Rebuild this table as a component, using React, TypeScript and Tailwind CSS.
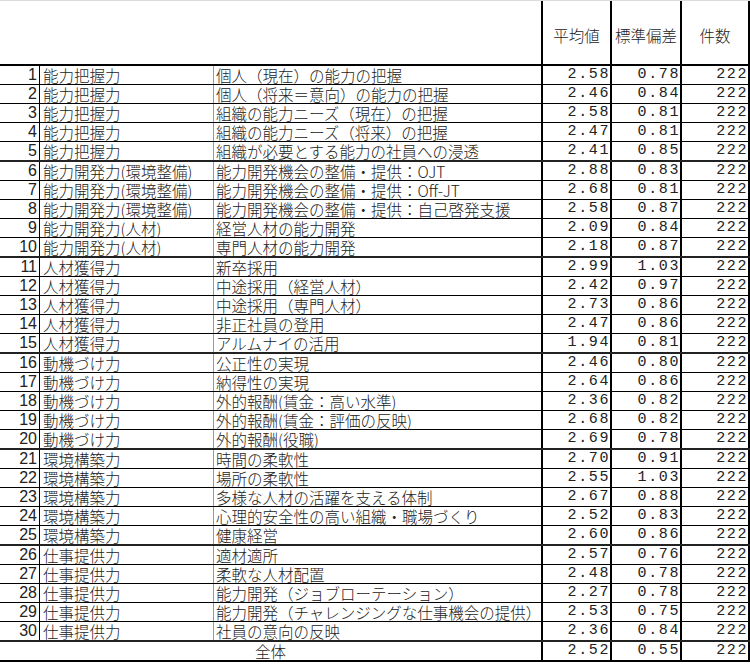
import React from "react";

type Row = [string, string, string, string];

const rows: Row[] = [
  ["能力把握力", "個人（現在）の能力の把握", "2.58", "0.78"],
  ["能力把握力", "個人（将来＝意向）の能力の把握", "2.46", "0.84"],
  ["能力把握力", "組織の能力ニーズ（現在）の把握", "2.58", "0.81"],
  ["能力把握力", "組織の能力ニーズ（将来）の把握", "2.47", "0.81"],
  ["能力把握力", "組織が必要とする能力の社員への浸透", "2.41", "0.85"],
  ["能力開発力(環境整備)", "能力開発機会の整備・提供：OJT", "2.88", "0.83"],
  ["能力開発力(環境整備)", "能力開発機会の整備・提供：Off-JT", "2.68", "0.81"],
  ["能力開発力(環境整備)", "能力開発機会の整備・提供：自己啓発支援", "2.58", "0.87"],
  ["能力開発力(人材)", "経営人材の能力開発", "2.09", "0.84"],
  ["能力開発力(人材)", "専門人材の能力開発", "2.18", "0.87"],
  ["人材獲得力", "新卒採用", "2.99", "1.03"],
  ["人材獲得力", "中途採用（経営人材）", "2.42", "0.97"],
  ["人材獲得力", "中途採用（専門人材）", "2.73", "0.86"],
  ["人材獲得力", "非正社員の登用", "2.47", "0.86"],
  ["人材獲得力", "アルムナイの活用", "1.94", "0.81"],
  ["動機づけ力", "公正性の実現", "2.46", "0.80"],
  ["動機づけ力", "納得性の実現", "2.64", "0.86"],
  ["動機づけ力", "外的報酬(賃金：高い水準)", "2.36", "0.82"],
  ["動機づけ力", "外的報酬(賃金：評価の反映)", "2.68", "0.82"],
  ["動機づけ力", "外的報酬(役職)", "2.69", "0.78"],
  ["環境構築力", "時間の柔軟性", "2.70", "0.91"],
  ["環境構築力", "場所の柔軟性", "2.55", "1.03"],
  ["環境構築力", "多様な人材の活躍を支える体制", "2.67", "0.88"],
  ["環境構築力", "心理的安全性の高い組織・職場づくり", "2.52", "0.83"],
  ["環境構築力", "健康経営", "2.60", "0.86"],
  ["仕事提供力", "適材適所", "2.57", "0.76"],
  ["仕事提供力", "柔軟な人材配置", "2.48", "0.78"],
  ["仕事提供力", "能力開発（ジョブローテーション）", "2.27", "0.78"],
  ["仕事提供力", "能力開発（チャレンジングな仕事機会の提供）", "2.53", "0.75"],
  ["仕事提供力", "社員の意向の反映", "2.36", "0.84"],
];

const jp = "font-['Noto_Sans_CJK_JP','Noto_Sans_CJK_SC',sans-serif] font-light";
const mono = "font-['Liberation_Mono',monospace] tracking-[1.6px] text-[15px]";

export default function App() {
  return (
    <div className={`w-[750px] h-[664px] bg-white text-[#222] text-[15.5px] ${jp}`}>
      <div className="border-t border-[#dcdcdc]" />
      {/* header */}
      <div className="flex h-[65px] border-b-2 border-black">
        <div className="w-[543px] border-r-2 border-black" />
        <div className="w-[69px] border-r-2 border-black flex items-center justify-center pt-[6px]">平均値</div>
        <div className="w-[70px] border-r-2 border-black flex items-center justify-center pt-[6px] whitespace-nowrap">標準偏差</div>
        <div className="w-[68px] border-r-2 border-black flex items-center justify-center pt-[6px]">件数</div>
      </div>
      {rows.map((r, i) => {
        const thick = (i + 1) % 5 === 0;
        return (
          <div
            key={i}
            className={`flex ${thick ? "h-[20px] border-b-2 border-[#222]" : "h-[19px] border-b border-black"}`}
          >
            <div className="w-[40px] border-r border-black text-right pr-[2px] font-['Liberation_Sans',sans-serif] font-normal text-[16px] leading-[18px]">
              {i + 1}
            </div>
            <div className="w-[174px] border-r border-[#9a9a9a] pl-[3px] whitespace-nowrap leading-[18px]">{r[0]}</div>
            <div className="w-[329px] border-r-2 border-black pl-[2px] whitespace-nowrap leading-[18px]">{r[1]}</div>
            <div className={`w-[69px] border-r-2 border-black text-right leading-[18px] ${mono}`}>{r[2]}</div>
            <div className={`w-[70px] border-r-2 border-black text-right leading-[18px] ${mono}`}>{r[3]}</div>
            <div className={`w-[68px] border-r-2 border-black text-right leading-[18px] ${mono}`}>222</div>
          </div>
        );
      })}
      <div className="flex h-[20px] border-b-2 border-black">
        <div className="w-[543px] border-r-2 border-black text-center leading-[18px]">全体</div>
        <div className={`w-[69px] border-r-2 border-black text-right leading-[18px] ${mono}`}>2.52</div>
        <div className={`w-[70px] border-r-2 border-black text-right leading-[18px] ${mono}`}>0.55</div>
        <div className={`w-[68px] border-r-2 border-black text-right leading-[18px] ${mono}`}>222</div>
      </div>
    </div>
  );
}
